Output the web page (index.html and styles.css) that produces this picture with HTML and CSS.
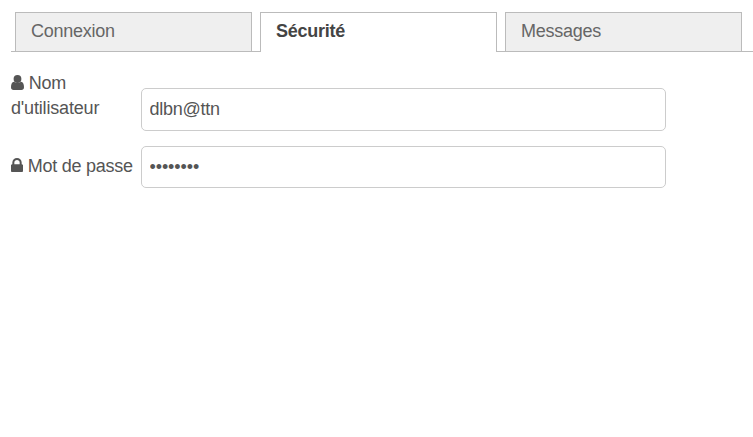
FILE: index.html
```html
<!DOCTYPE html>
<html lang="fr">
<head>
<meta charset="utf-8">
<title>Sécurité</title>
<link rel="stylesheet" href="styles.css">
</head>
<body>
<nav class="tabs">
<a class="tab">Connexion</a>
<a class="tab active">Sécurité</a>
<a class="tab">Messages</a>
</nav>
<form class="form">
<div class="row user">
<label class="label" for="user"><svg class="icon person" viewBox="0 0 13 15"><ellipse cx="6.5" cy="4" rx="3.900" ry="4"/><path d="M3 6.800C.8 7 0 9.500 0 12.300C0 14 1 15 2.600 15H10.400C12 15 13 14 13 12.300C13 9.500 12.200 7 10 6.800C9.500 7 8.500 7.900 6.500 7.900S3.500 7 3 6.800Z"/></svg> Nom <span class="word">d'utilisateur</span></label>
<input class="field" id="user" type="text" value="dlbn@ttn">
</div>
<div class="row pass">
<label class="label" for="pass"><svg class="icon lock" viewBox="0 0 1152 1408" preserveAspectRatio="none"><path d="M320 640h512v-192q0-106-75-181t-181-75-181 75-75 181v192zM1152 736v576q0 40-28 68t-68 28h-960q-40 0-68-28t-28-68v-576q0-40 28-68t68-28h32v-192q0-184 132-316t316-132 316 132 132 316v192h32q40 0 68 28t28 68z"/></svg> Mot de passe</label>
<input class="field" id="pass" type="password" value="password">
</div>
</form>
</body>
</html>
```
FILE: styles.css
```css
* { box-sizing: border-box; }
body {
  margin: 0;
  background: #fff;
  color: #555;
  font: 18px/25px "Liberation Sans", Arial, sans-serif;
  letter-spacing: -0.25px;
  overflow: hidden;
}
.tabs {
  display: flex;
  gap: 8px;
  height: 52px;
  margin-left: 11px;
  padding: 12px 0 0 4px;
  border-bottom: 1px solid #bbb;
}
.tab {
  width: 237px;
  height: 39px;
  flex: none;
  padding: 6px 15px;
  border: 1px solid #bbb;
  border-bottom: 0;
  background: #efefef;
  color: #666;
}
.active {
  height: 40px;
  background: #fff;
  color: #444;
  font-weight: bold;
}
.form { margin: 0 0 0 11px; }
.row { display: flex; }
.user { padding-top: 19px; }
.pass { margin-top: 15px; }
.label { width: 130px; flex: none; white-space: nowrap; }
.user .label { white-space: normal; padding-right: 20px; }
.pass .label { padding-top: 8px; }
.word { letter-spacing: -0.17px; }
.icon { fill: #555; vertical-align: -1px; }
.person { width: 13px; height: 15px; }
.lock { width: 12px; height: 14px; vertical-align: 0; }
.field {
  width: 525px;
  height: 42px;
  padding: 0 7.5px;
  border: 1px solid #ccc;
  border-radius: 5px;
  background: #fff;
  color: #555;
  font: inherit;
  letter-spacing: inherit;
}
.user .field { height: 43px; margin-top: 17px; }
.pass .field { letter-spacing: -0.1px; }
```
